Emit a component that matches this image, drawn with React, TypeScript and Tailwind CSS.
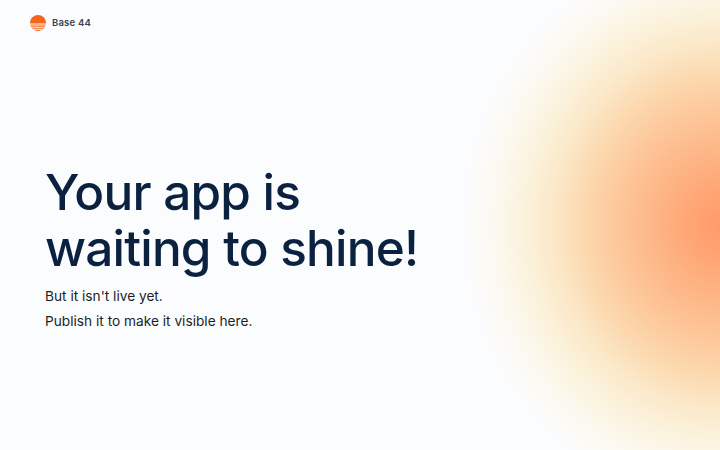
export default function App() {
  return (
    <div className="relative h-[450px] w-[720px] overflow-hidden bg-[#fbfcfe] font-['Inter',sans-serif]">
      <div className="absolute inset-0 bg-[radial-gradient(ellipse_260px_280px_at_722px_225px,#ff9a68_0%,#ffa776_14%,#fdb98a_29%,#fdc99c_42%,#fcd9b0_54%,#fbe8c8_65%,#fbf2dc_76%,#fbf9f0_88%,#fbfcfe_100%)]" />
      <div className="relative flex h-full flex-col">
        <header className="flex items-center gap-[6px] pl-[30px] pt-[15px]">
          <svg width="16" height="16" viewBox="0 0 16 16">
            <path d="M0 8a8 8 0 0 1 16 0v.4H0z" fill="#f4661b" />
            <path d="M.2 9.4h15.6l-.3 1H.5z" fill="#f4661b" />
            <path d="M.8 11.3h14.4l-.5 1H1.3z" fill="#f4661b" />
            <path d="M1.9 13.2h12.2c-.5.5-.9.8-1.4 1.1H3.3c-.5-.3-1-.6-1.4-1.1z" fill="#f4661b" />
            <path d="M4.5 15h7c-1 .6-2.2 1-3.5 1s-2.5-.4-3.5-1z" fill="#f4661b" />
          </svg>
          <span className="text-[9.5px] font-semibold tracking-[0.2px] text-[#374151]">Base 44</span>
        </header>
        <main className="pl-[45px] pt-[134px]">
          <h1 className="text-[49.5px] font-medium leading-[55.5px] tracking-[-0.8px] text-[#0a2240]">
            Your app is
            <br />
            waiting to shine!
          </h1>
          <p className="mt-[8px] text-[13.7px] leading-[25px] text-[#1c1f26]">But it isn't live yet.</p>
          <p className="text-[13.7px] leading-[25px] text-[#1c1f26]">Publish it to make it visible here.</p>
        </main>
      </div>
    </div>
  )
}
